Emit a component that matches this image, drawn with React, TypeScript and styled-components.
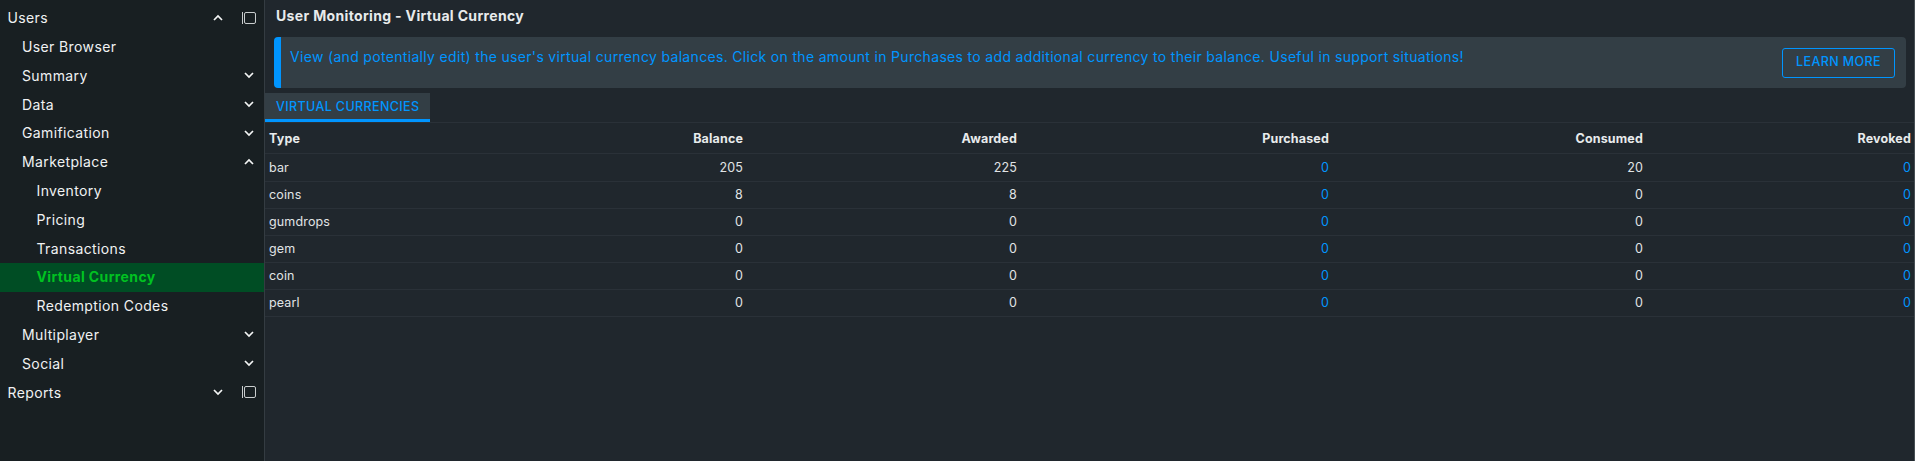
import React from "react";
import styled, { createGlobalStyle } from "styled-components";

const GlobalStyle = createGlobalStyle`
  *, *::before, *::after { box-sizing: border-box; }
  body {
    margin: 0;
    background: #20272d;
    color: #e4e8ea;
    font-family: Inter, "Liberation Sans", sans-serif;
    overflow: hidden;
  }
`;

const Page = styled.div`
  display: grid;
  grid-template-columns: 265px minmax(0, 1fr);
  height: 100vh;
`;

const Sidebar = styled.nav`
  background: #181f22;
  border-right: 1px solid #343c42;
  padding-top: 3.7px;
`;

const NavItem = styled.a<{ $level: number; $active?: boolean }>`
  display: flex;
  align-items: center;
  height: 28.8px;
  padding: 0 7px 0.8px ${(p) => 7.5 + p.$level * 14.5}px;
  font-size: 14px;
  letter-spacing: 0.38px;
  font-weight: ${(p) => (p.$active ? 700 : 400)};
  color: ${(p) => (p.$active ? "#00c221" : "#f0f2f3")};
  background: ${(p) => (p.$active ? "#004d24" : "transparent")};
`;

const NavLabel = styled.span`
  flex: 1;
`;

const Chevron = styled.svg<{ $open?: boolean }>`
  width: 16px;
  height: 16px;
  fill: none;
  stroke: #f4f6f6;
  stroke-width: 1.7;
  transform: ${(p) => (p.$open ? "scaleY(-1)" : "none")};
`;

const PanelIcon = styled.svg`
  width: 16px;
  height: 14px;
  margin-left: 15px;
  fill: none;
  stroke: #c9cdce;
  stroke-width: 1;
`;

const Main = styled.main`
  min-width: 0;
  border-right: 1px solid #474f54;
`;

const Title = styled.h1`
  margin: 0;
  height: 37px;
  padding: 0 11px;
  font-size: 14px;
  font-weight: 700;
  line-height: 32px;
  letter-spacing: 0.34px;
  color: #e8ebec;
`;

const Banner = styled.section`
  display: flex;
  justify-content: space-between;
  height: 51px;
  margin: 0 8px 5px 9px;
  padding: 11px 11px 0 9px;
  border-left: 7px solid #0095ff;
  border-radius: 4px;
  background: #333e45;
`;

const BannerText = styled.p`
  margin: 0;
  font-size: 14px;
  line-height: 18px;
  letter-spacing: 0.323px;
  color: #0095ff;
`;

const LearnMore = styled.button`
  width: 113px;
  height: 30px;
  padding: 0 0 3px;
  border: 1px solid #0095ff;
  border-radius: 3px;
  background: transparent;
  color: #0095ff;
  font: 500 12.5px Inter, sans-serif;
  letter-spacing: 0.4px;
  white-space: nowrap;
`;

const Tabs = styled.div`
  display: flex;
  height: 29px;
`;

const Tab = styled.div`
  width: 165px;
  padding-left: 11px;
  border-bottom: 3px solid #0095ff;
  background: #333e45;
  color: #0095ff;
  font-size: 12.5px;
  font-weight: 500;
  line-height: 27px;
  letter-spacing: 0.38px;
  white-space: nowrap;
`;

const Table = styled.table`
  width: 100%;
  border-collapse: separate;
  border-spacing: 0;
  table-layout: fixed;
  border-top: 1px solid #2a3138;
  font-size: 12.5px;
  letter-spacing: 0.15px;
`;

const Row = styled.tr<{ $height: number }>`
  height: ${(p) => p.$height}px;
`;

const HeadCell = styled.th<{ $left?: boolean }>`
  padding: 2px 4px 0;
  border-bottom: 1px solid #2a3138;
  font-weight: 700;
  line-height: 16px;
  text-align: ${(p) => (p.$left ? "left" : "right")};
  color: #e8ebec;

  &:last-child {
    padding-right: 3px;
  }
`;

const Cell = styled.td<{ $left?: boolean; $link?: boolean }>`
  padding: 0 4px;
  border-bottom: 1px solid #2a3138;
  line-height: 16px;
  text-align: ${(p) => (p.$left ? "left" : "right")};
  color: ${(p) => (p.$link ? "#0095ff" : "#e0e4e6")};

  &:last-child {
    padding-right: 3px;
  }
`;

type NavEntry = {
  label: string;
  level: number;
  chevron?: "open" | "closed";
  panel?: boolean;
  active?: boolean;
};

const nav: NavEntry[] = [
  { label: "Users", level: 0, chevron: "open", panel: true },
  { label: "User Browser", level: 1 },
  { label: "Summary", level: 1, chevron: "closed" },
  { label: "Data", level: 1, chevron: "closed" },
  { label: "Gamification", level: 1, chevron: "closed" },
  { label: "Marketplace", level: 1, chevron: "open" },
  { label: "Inventory", level: 2 },
  { label: "Pricing", level: 2 },
  { label: "Transactions", level: 2 },
  { label: "Virtual Currency", level: 2, active: true },
  { label: "Redemption Codes", level: 2 },
  { label: "Multiplayer", level: 1, chevron: "closed" },
  { label: "Social", level: 1, chevron: "closed" },
  { label: "Reports", level: 0, chevron: "closed", panel: true },
];

const columns = ["Type", "Balance", "Awarded", "Purchased", "Consumed", "Revoked"];
const widths = [241, 241, 274, 312, 314, 267];

const rows: (string | number)[][] = [
  ["bar", 205, 225, 0, 20, 0],
  ["coins", 8, 8, 0, 0, 0],
  ["gumdrops", 0, 0, 0, 0, 0],
  ["gem", 0, 0, 0, 0, 0],
  ["coin", 0, 0, 0, 0, 0],
  ["pearl", 0, 0, 0, 0, 0],
];

export default function App() {
  return (
    <Page>
      <GlobalStyle />
      <Sidebar>
        {nav.map((item) => (
          <NavItem key={item.label} $level={item.level} $active={item.active}>
            <NavLabel>{item.label}</NavLabel>
            {item.chevron && (
              <Chevron viewBox="0 0 16 16" $open={item.chevron === "open"}>
                <path d="M4 6l4 4 4-4" />
              </Chevron>
            )}
            {item.panel && (
              <PanelIcon viewBox="0 0 16 14">
                <path d="M1.5 1v12" />
                <rect x="3.5" y="1.5" width="11" height="11" rx="1.5" />
              </PanelIcon>
            )}
          </NavItem>
        ))}
      </Sidebar>
      <Main>
        <Title>User Monitoring - Virtual Currency</Title>
        <Banner>
          <BannerText>
            View (and potentially edit) the user's virtual currency balances. Click on the amount in
            Purchases to add additional currency to their balance. Useful in support situations!
          </BannerText>
          <LearnMore>LEARN MORE</LearnMore>
        </Banner>
        <Tabs>
          <Tab>VIRTUAL CURRENCIES</Tab>
        </Tabs>
        <Table>
          <colgroup>
            {widths.map((w, i) => (
              <col key={i} width={w} />
            ))}
          </colgroup>
          <thead>
            <Row $height={31}>
              {columns.map((name, i) => (
                <HeadCell key={name} $left={i === 0}>
                  {name}
                </HeadCell>
              ))}
            </Row>
          </thead>
          <tbody>
            {rows.map((row, r) => (
              <Row key={row[0]} $height={r === 0 ? 28 : 27}>
                {row.map((value, i) => (
                  <Cell key={i} $left={i === 0} $link={i === 3 || i === 5}>
                    {value}
                  </Cell>
                ))}
              </Row>
            ))}
          </tbody>
        </Table>
      </Main>
    </Page>
  );
}
